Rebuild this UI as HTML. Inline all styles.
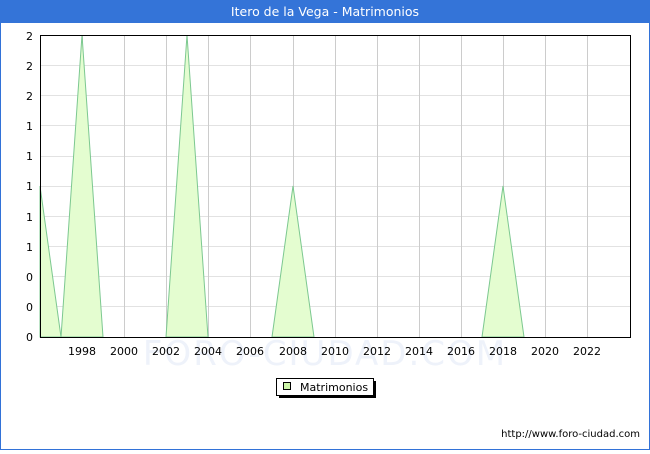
<!DOCTYPE html>
<html><head><style>
body{margin:0;width:650px;height:450px;overflow:hidden;background:#fff;font-family:"DejaVu Sans","Liberation Sans",sans-serif;}
</style></head><body>
<svg width="650" height="450" xmlns="http://www.w3.org/2000/svg" font-family="DejaVu Sans, Liberation Sans, sans-serif">
<rect x="0.5" y="0.5" width="649" height="449" fill="#fff" stroke="#3272d8"/>
<rect x="0" y="0" width="650" height="23" fill="#3474d8"/>
<text x="325" y="16" fill="#fff" font-size="12.5" text-anchor="middle">Itero de la Vega - Matrimonios</text>
<text x="325" y="365" fill="#eef2fa" font-size="34" text-anchor="middle" letter-spacing="2">FORO-CIUDAD.COM</text>
<g stroke="#e2e2e2" stroke-width="1">
<line x1="40" y1="65.5" x2="630" y2="65.5"/><line x1="40" y1="95.5" x2="630" y2="95.5"/>
<line x1="40" y1="125.5" x2="630" y2="125.5"/><line x1="40" y1="156.5" x2="630" y2="156.5"/>
<line x1="40" y1="186.5" x2="630" y2="186.5"/><line x1="40" y1="216.5" x2="630" y2="216.5"/>
<line x1="40" y1="246.5" x2="630" y2="246.5"/><line x1="40" y1="276.5" x2="630" y2="276.5"/>
<line x1="40" y1="306.5" x2="630" y2="306.5"/>
</g>
<g stroke="#cccccc" stroke-width="1">
<line x1="82.5" y1="35" x2="82.5" y2="337"/><line x1="124.5" y1="35" x2="124.5" y2="337"/>
<line x1="166.5" y1="35" x2="166.5" y2="337"/><line x1="208.5" y1="35" x2="208.5" y2="337"/>
<line x1="250.5" y1="35" x2="250.5" y2="337"/><line x1="293.5" y1="35" x2="293.5" y2="337"/>
<line x1="335.5" y1="35" x2="335.5" y2="337"/><line x1="377.5" y1="35" x2="377.5" y2="337"/>
<line x1="419.5" y1="35" x2="419.5" y2="337"/><line x1="461.5" y1="35" x2="461.5" y2="337"/>
<line x1="503.5" y1="35" x2="503.5" y2="337"/><line x1="545.5" y1="35" x2="545.5" y2="337"/>
<line x1="587.5" y1="35" x2="587.5" y2="337"/>
</g>
<g fill="#e4fdd0" stroke="#7cc890" stroke-width="1">
<polygon points="40,186 61,337 40,337"/>
<polygon points="61,337 82,35 103,337"/>
<polygon points="166,337 187,35 208,337"/>
<polygon points="272,337 293,186 314,337"/>
<polygon points="482,337 503,186 524,337"/>
</g>
<rect x="40.5" y="35.5" width="590" height="302" fill="none" stroke="#000"/>
<g font-size="11" fill="#000" text-anchor="end">
<text x="33" y="40">2</text><text x="33" y="70">2</text><text x="33" y="100">2</text>
<text x="33" y="130">1</text><text x="33" y="160">1</text><text x="33" y="190">1</text>
<text x="33" y="221">1</text><text x="33" y="251">1</text><text x="33" y="281">0</text>
<text x="33" y="311">0</text><text x="33" y="341">0</text>
</g>
<g font-size="11" fill="#000" text-anchor="middle">
<text x="82" y="355">1998</text><text x="124" y="355">2000</text><text x="166" y="355">2002</text>
<text x="208" y="355">2004</text><text x="250" y="355">2006</text><text x="293" y="355">2008</text>
<text x="335" y="355">2010</text><text x="377" y="355">2012</text><text x="419" y="355">2014</text>
<text x="461" y="355">2016</text><text x="503" y="355">2018</text><text x="545" y="355">2020</text>
<text x="587" y="355">2022</text>
</g>
<rect x="279" y="381" width="97" height="17" fill="#000"/>
<rect x="276.5" y="378.5" width="97" height="17" fill="#fff" stroke="#000"/>
<rect x="283.5" y="382.5" width="7" height="7" fill="#ccf5a8" stroke="#000"/>
<text x="300" y="391" font-size="11" fill="#000">Matrimonios</text>
<text x="640" y="437" font-size="10" fill="#000" text-anchor="end">http://www.foro-ciudad.com</text>
</svg>
</body></html>
